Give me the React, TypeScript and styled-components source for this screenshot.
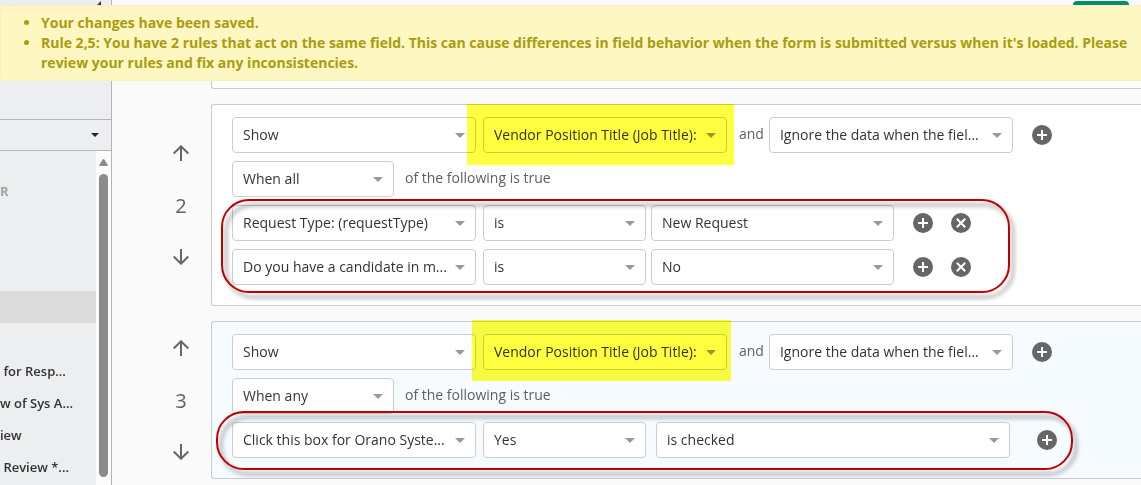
import React from "react";
import styled, { createGlobalStyle, css } from "styled-components";

const GlobalStyle = createGlobalStyle`
  *, *::before, *::after { box-sizing: border-box; }
  body {
    margin: 0;
    background: #fafafa;
    color: #606060;
    font: 14px/20px "Open Sans", "Noto Sans", sans-serif;
  }
  button { padding: 0; border: 0; background: none; font: inherit; cursor: pointer; }
`;

const Page = styled.div`
  position: relative;
  display: flex;
  min-height: 100vh;
`;

/* ---------- notice ---------- */

const Notice = styled.div`
  position: absolute;
  top: 5px;
  left: 0;
  right: 0;
  z-index: 5;
  padding: 7px 10px 7px 0;
  border: 1px solid #fdeccb;
  border-right: 0;
  border-radius: 4px 0 0 4px;
  background: #fef7c1;
  color: #a89c12;
  font-weight: 700;
`;

const NoticeList = styled.ul`
  margin: 0;
  padding-left: 40px;
`;

/* ---------- sidebar ---------- */

const Sidebar = styled.aside`
  display: flex;
  flex-direction: column;
  flex: 0 0 112px;
  border-right: 1px solid #b4b4b4;
  background: #edeef0;
`;

const SidebarTop = styled.div`
  display: flex;
  align-items: flex-start;
  justify-content: flex-end;
  height: 119px;
  padding: 1px 10px;
`;

const SidebarPicker = styled.button`
  display: flex;
  align-items: center;
  justify-content: flex-end;
  height: 32px;
  padding-right: 12px;
  border-top: 1px solid #b4b4b4;
  border-bottom: 1px solid #b4b4b4;
`;

const SidebarBody = styled.div`
  display: flex;
  flex: 1;
`;

const StepList = styled.nav`
  flex: 1;
  padding-top: 24px;
`;

const StepHeading = styled.h2`
  margin: 0 0 84px;
  color: #a3a3a3;
  font-size: 13px;
  font-weight: 700;
  line-height: 32px;
`;

const StepLink = styled.a<{ $active?: boolean }>`
  display: block;
  height: 32px;
  background: ${(p) => (p.$active ? "#dbdbdb" : "transparent")};
  color: #333;
  font-size: 13px;
  font-weight: 600;
  line-height: 32px;
  text-decoration: none;
  white-space: pre;
`;

const ScrollTrack = styled.div`
  display: flex;
  flex-direction: column;
  align-items: center;
  gap: 8px;
  width: 15px;
  padding: 8px 0 17px;
  background: #fcfcfc;
`;

const ScrollThumb = styled.div`
  flex: 1;
  width: 9px;
  border-radius: 5px;
  background: #8b8b8b;
`;

/* ---------- rules ---------- */

const Main = styled.main`
  flex: 1;
  min-width: 0;
  padding-left: 39px;
`;

const Toolbar = styled.div`
  display: flex;
  justify-content: flex-end;
  padding: 1px 12px 7px;
`;

const SaveButton = styled.button`
  width: 56px;
  height: 32px;
  border-radius: 4px;
  background: #008f6c;
`;

const RuleRow = styled.section`
  display: flex;
  margin-bottom: 15px;
`;

const OrderColumn = styled.div`
  display: flex;
  flex: 0 0 60px;
  flex-direction: column;
  align-items: center;
  justify-content: center;
  gap: 30px;
`;

const OrderNumber = styled.span`
  height: 28px;
  font-size: 20px;
  line-height: 30px;
`;

const OrderButton = styled.button`
  width: 16px;
  height: 16px;
  svg { display: block; }
`;

const RuleCard = styled.div<{ $tinted?: boolean }>`
  display: flex;
  flex: 1;
  flex-direction: column;
  gap: 8px;
  min-width: 0;
  padding: 12px 0 20px 20px;
  border: 1px solid #ccc;
  border-right: 0;
  border-radius: 3px 0 0 3px;
  background: ${(p) => (p.$tinted ? "#f5fbff" : "#fff")};
`;

const PartialCard = styled(RuleCard)`
  min-height: 49px;
`;

const Line = styled.div`
  display: flex;
  align-items: center;
  height: 36px;
`;

const Conditions = styled.div`
  position: relative;
  display: flex;
  flex-direction: column;
  gap: 8px;
  width: fit-content;
`;

const Words = styled.span<{ $gap?: number }>`
  margin-right: ${(p) => p.$gap ?? 0}px;
  padding-bottom: 2px;
  white-space: nowrap;
`;

const Field = styled.div<{ $width: number; $gap: number }>`
  position: relative;
  flex: 0 0 ${(p) => p.$width}px;
  width: ${(p) => p.$width}px;
  margin-right: ${(p) => p.$gap}px;

  &::after {
    content: "";
    position: absolute;
    top: 16px;
    right: 11px;
    border: 5px solid transparent;
    border-top-color: #999;
    border-bottom: 0;
    pointer-events: none;
  }
`;

const SelectBox = styled.select`
  display: block;
  width: 100%;
  height: 36px;
  padding: 0 24px 0 10px;
  appearance: none;
  border: 1px solid #ccc;
  border-radius: 4px;
  background: #fff;
  color: #333;
  font: inherit;
`;

type Size = "wide" | "snug";

const Marker = styled.span<{ $size: Size }>`
  position: absolute;
  z-index: 1;
  background: #ffff40;
  mix-blend-mode: multiply;
  pointer-events: none;
  ${(p) =>
    p.$size === "wide"
      ? css`inset: -13px -7px -12px -16px;`
      : css`inset: -14px -4px -11px -11px;`}
`;

const Ring = styled.span<{ $size: Size }>`
  position: absolute;
  z-index: 2;
  border: 2px solid #c00000;
  border-radius: 28px;
  filter: drop-shadow(4px 5px 2px rgba(0, 0, 0, 0.45));
  pointer-events: none;
  ${(p) =>
    p.$size === "wide"
      ? css`inset: -6px -39px -8px -11px;`
      : css`inset: -11px -16px -12px -16px;`}
`;

const IconButton = styled.button<{ $gap?: number }>`
  flex: 0 0 20px;
  width: 20px;
  height: 20px;
  margin-right: ${(p) => p.$gap ?? 0}px;
  svg { display: block; }
`;

function Select({ label, value, width = 244, gap = 7, marker }: {
  label: string; value: string; width?: number; gap?: number; marker?: Size;
}) {
  return (
    <Field $width={width} $gap={gap}>
      <SelectBox aria-label={label} defaultValue={value}>
        <option>{value}</option>
      </SelectBox>
      {marker && <Marker $size={marker} />}
    </Field>
  );
}

function AddButton({ gap }: { gap?: number }) {
  return (
    <IconButton type="button" aria-label="Add" $gap={gap}>
      <svg width="20" height="20" viewBox="0 0 20 20">
        <circle cx="10" cy="10" r="10" fill="#666" />
        <path d="M10 5v10M5 10h10" stroke="#fff" strokeWidth="2" />
      </svg>
    </IconButton>
  );
}

function RemoveButton() {
  return (
    <IconButton type="button" aria-label="Remove">
      <svg width="20" height="20" viewBox="0 0 20 20">
        <circle cx="10" cy="10" r="10" fill="#666" />
        <path d="M5.8 5.8l8.4 8.4M14.2 5.8l-8.4 8.4" stroke="#fff" strokeWidth="2" />
      </svg>
    </IconButton>
  );
}

function Order({ number }: { number: number }) {
  return (
    <OrderColumn>
      <OrderButton type="button" aria-label={`Move rule ${number} up`}>
        <svg width="16" height="16" viewBox="0 0 16 16" fill="none" stroke="#666" strokeWidth="2">
          <path d="M8 16V1.5M.7 8.5L8 1.3l7.3 7.2" />
        </svg>
      </OrderButton>
      <OrderNumber>{number}</OrderNumber>
      <OrderButton type="button" aria-label={`Move rule ${number} down`}>
        <svg width="16" height="16" viewBox="0 0 16 16" fill="none" stroke="#666" strokeWidth="2">
          <path d="M8 0v14.5M.7 7.5L8 14.7l7.3-7.2" />
        </svg>
      </OrderButton>
    </OrderColumn>
  );
}

function ActionLine({ marker }: { marker: Size }) {
  return (
    <Line>
      <Select label="Action" value="Show" />
      <Select label="Field" value="Vendor Position Title (Job Title):" gap={12} marker={marker} />
      <Words $gap={5}>and</Words>
      <Select label="Hidden data" value="Ignore the data when the fiel..." gap={19} />
      <AddButton />
    </Line>
  );
}

function MatchLine({ value }: { value: string }) {
  return (
    <Line>
      <Select label="Match" value={value} width={162} gap={11} />
      <Words>of the following is true</Words>
    </Line>
  );
}

function ConditionLine({ field, answer }: { field: string; answer: string }) {
  return (
    <Line>
      <Select label="Condition field" value={field} />
      <Select label="Operator" value="is" width={163} gap={5} />
      <Select label="Answer" value={answer} width={243} gap={19} />
      <AddButton gap={18} />
      <RemoveButton />
    </Line>
  );
}

const steps = [" for Resp...", "w of Sys A...", "iew", " Review *..."];

export default function App() {
  return (
    <Page>
      <GlobalStyle />
      <Notice role="status">
        <NoticeList>
          <li>Your changes have been saved.</li>
          <li>
            Rule 2,5: You have 2 rules that act on the same field. This can cause differences in
            field behavior when the form is submitted versus when it's loaded. Please review your
            rules and fix any inconsistencies.
          </li>
        </NoticeList>
      </Notice>

      <Sidebar>
        <SidebarTop>
          <svg width="5" height="10" viewBox="0 0 5 10">
            <path d="M5 0v10L0 5z" fill="#333" />
          </svg>
        </SidebarTop>
        <SidebarPicker type="button" aria-label="Choose workflow">
          <svg width="8" height="4" viewBox="0 0 8 4">
            <path d="M0 0h8L4 4z" fill="#222" />
          </svg>
        </SidebarPicker>
        <SidebarBody>
          <StepList>
            <StepHeading>R</StepHeading>
            <StepLink href="#current" aria-label="Current step" $active />
            <StepLink href="#next" aria-label="Next step" />
            {steps.map((step) => (
              <StepLink href="#step" key={step}>{step}</StepLink>
            ))}
          </StepList>
          <ScrollTrack>
            <svg width="9" height="7" viewBox="0 0 9 7">
              <path d="M3.6.6Q4.5-.5 5.4.6L8.8 6Q9 7 8 7H1Q0 7 .2 6z" fill="#8b8b8b" />
            </svg>
            <ScrollThumb />
          </ScrollTrack>
        </SidebarBody>
      </Sidebar>

      <Main>
        <Toolbar>
          <SaveButton type="button" aria-label="Save" />
        </Toolbar>

        <RuleRow>
          <OrderColumn />
          <PartialCard />
        </RuleRow>

        <RuleRow>
          <Order number={2} />
          <RuleCard>
            <ActionLine marker="wide" />
            <MatchLine value="When all" />
            <Conditions>
              <ConditionLine field="Request Type: (requestType)" answer="New Request" />
              <ConditionLine field="Do you have a candidate in m..." answer="No" />
              <Ring $size="wide" />
            </Conditions>
          </RuleCard>
        </RuleRow>

        <RuleRow>
          <Order number={3} />
          <RuleCard $tinted>
            <ActionLine marker="snug" />
            <MatchLine value="When any" />
            <Conditions>
              <Line>
                <Select label="Condition field" value="Click this box for Orano Syste..." />
                <Select label="Operator" value="Yes" width={163} gap={10} />
                <Select label="Answer" value="is checked" width={354} gap={27} />
                <AddButton />
              </Line>
              <Ring $size="snug" />
            </Conditions>
          </RuleCard>
        </RuleRow>
      </Main>
    </Page>
  );
}
